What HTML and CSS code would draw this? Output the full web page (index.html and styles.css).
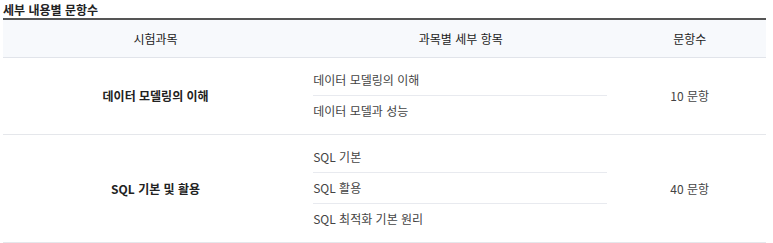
FILE: index.html
```html
<!DOCTYPE html>
<html lang="ko">
<head>
<meta charset="utf-8">
<link rel="stylesheet" href="styles.css">
</head>
<body>
<section class="wrap">
  <h3 class="title">세부 내용별 문항수</h3>
  <table class="tbl">
    <colgroup><col class="c1"><col class="c2"><col class="c3"></colgroup>
    <thead>
      <tr><th>시험과목</th><th>과목별 세부 항목</th><th>문항수</th></tr>
    </thead>
    <tbody>
      <tr>
        <td class="subj">데이터 모델링의 이해</td>
        <td class="items"><ul><li>데이터 모델링의 이해</li><li>데이터 모델과 성능</li></ul></td>
        <td class="cnt">10 문항</td>
      </tr>
      <tr>
        <td class="subj">SQL 기본 및 활용</td>
        <td class="items"><ul><li>SQL 기본</li><li>SQL 활용</li><li>SQL 최적화 기본 원리</li></ul></td>
        <td class="cnt">40 문항</td>
      </tr>
    </tbody>
  </table>
</section>
</body>
</html>
```

FILE: styles.css
```css
* { box-sizing: border-box; }
html, body { margin: 0; padding: 0; background: #fff; }
body {
  font-family: "Noto Sans CJK KR", "Noto Sans", sans-serif;
  color: #333;
  font-size: 12px;
}
.wrap { padding: 2px 7px 0 3px; }
.title {
  margin: 0;
  font-size: 12px;
  font-weight: 700;
  color: #222;
  line-height: 15px;
  height: 16px;
}
.tbl {
  width: 100%;
  border-collapse: collapse;
  table-layout: fixed;
  border-top: 2px solid #555;
}
.c1 { width: 40%; }
.c2 { width: 40%; }
.c3 { width: 20%; }
.tbl th {
  background: #f7f9fc;
  height: 38px;
  font-weight: 400;
  font-size: 12px;
  color: #222;
  border-bottom: 1px solid #e1e4ea;
  padding: 0;
}
.tbl td {
  border-bottom: 1px solid #e5e7eb;
  padding: 0;
  text-align: center;
  color: #444;
}
.tbl td.subj { font-weight: 700; color: #222; }
.tbl td.items { padding: 7px 6px 8px 5px; text-align: left; }
.items ul { list-style: none; margin: 0; padding: 0; }
.items li {
  height: 31px;
  line-height: 30px;
  border-bottom: 1px solid #e8eaef;
  color: #444;
}
.items li:last-child { border-bottom: 0; height: 30px; }
```
